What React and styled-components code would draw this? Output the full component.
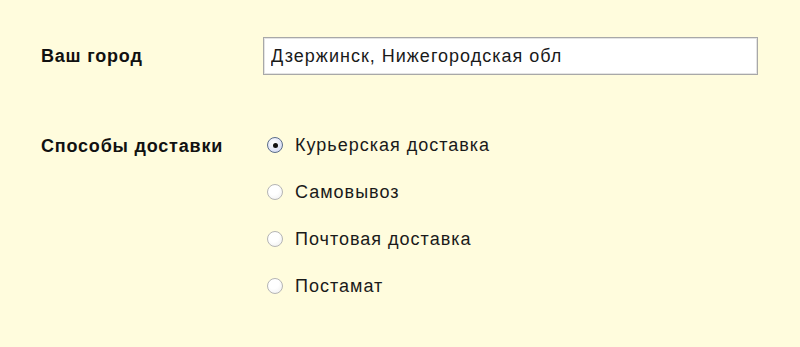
import React from "react";
import styled, { createGlobalStyle } from "styled-components";

const options = [
  "Курьерская доставка",
  "Самовывоз",
  "Почтовая доставка",
  "Постамат",
];

function App() {
  return (
    <React.Fragment>
      <GlobalStyle />
      <Page>
        <Row>
          <Label>Ваш город</Label>
          <Field>
            <CityInput type="text" defaultValue="Дзержинск, Нижегородская обл" />
          </Field>
        </Row>
        <Row $top>
          <Label $pad>Способы доставки</Label>
          <Options>
            {options.map((o, i) => (
              <Option key={o}>
                <Radio $checked={i === 0} />
                <OptionText>{o}</OptionText>
              </Option>
            ))}
          </Options>
        </Row>
      </Page>
    </React.Fragment>
  );
}

const GlobalStyle = createGlobalStyle`
  * {
    margin: 0;
    padding: 0;
    box-sizing: border-box;
  }
  body {
    background: #fffcdd;
    color: #1a1a1a;
    font-family: "Liberation Sans", Arial, sans-serif;
  }
`;

const Page = styled.div`
  width: 800px;
  height: 347px;
  padding: 37px 0 0 41px;
  display: flex;
  flex-direction: column;
  gap: 58px;
`;

const Row = styled.div`
  display: flex;
  align-items: ${(p) => (p.$top ? "flex-start" : "center")};
`;

const Label = styled.div`
  width: 222px;
  font-size: 18px;
  letter-spacing: 0.8px;
  font-weight: bold;
  color: #111;
  padding-top: ${(p) => (p.$pad ? "3px" : "0")};
`;

const Field = styled.div`
  width: 495px;
`;

const CityInput = styled.input`
  width: 100%;
  height: 38px;
  border: 1px solid #a8a8a8;
  box-shadow: inset 0 0 0 1px #e4e4e4;
  background: #fff;
  padding: 0 7px;
  font-family: "Liberation Sans", Arial, sans-serif;
  font-size: 18px;
  letter-spacing: 1px;
  color: #1a1a1a;
  outline: none;
`;

const Options = styled.div`
  display: flex;
  flex-direction: column;
  gap: 27px;
  padding-top: 2px;
`;

const Option = styled.label`
  display: flex;
  align-items: center;
  gap: 12px;
  height: 20px;
  padding-left: 4px;
`;

const Radio = styled.span`
  position: relative;
  flex: none;
  width: 16px;
  height: 16px;
  border-radius: 50%;
  border: 1px solid ${(p) => (p.$checked ? "#5a6c8a" : "#b5b5b5")};
  background: ${(p) =>
    p.$checked
      ? "radial-gradient(circle at 40% 35%, #ffffff 0%, #d6dcf4 80%)"
      : "radial-gradient(circle at 40% 35%, #ffffff 40%, #ececec 100%)"};
  &::after {
    content: "";
    display: ${(p) => (p.$checked ? "block" : "none")};
    position: absolute;
    left: 4.5px;
    top: 4.5px;
    width: 5px;
    height: 5px;
    border-radius: 50%;
    background: #111;
  }
`;

const OptionText = styled.span`
  font-size: 18px;
  letter-spacing: 1px;
  color: #1a1a1a;
`;

export default App;
